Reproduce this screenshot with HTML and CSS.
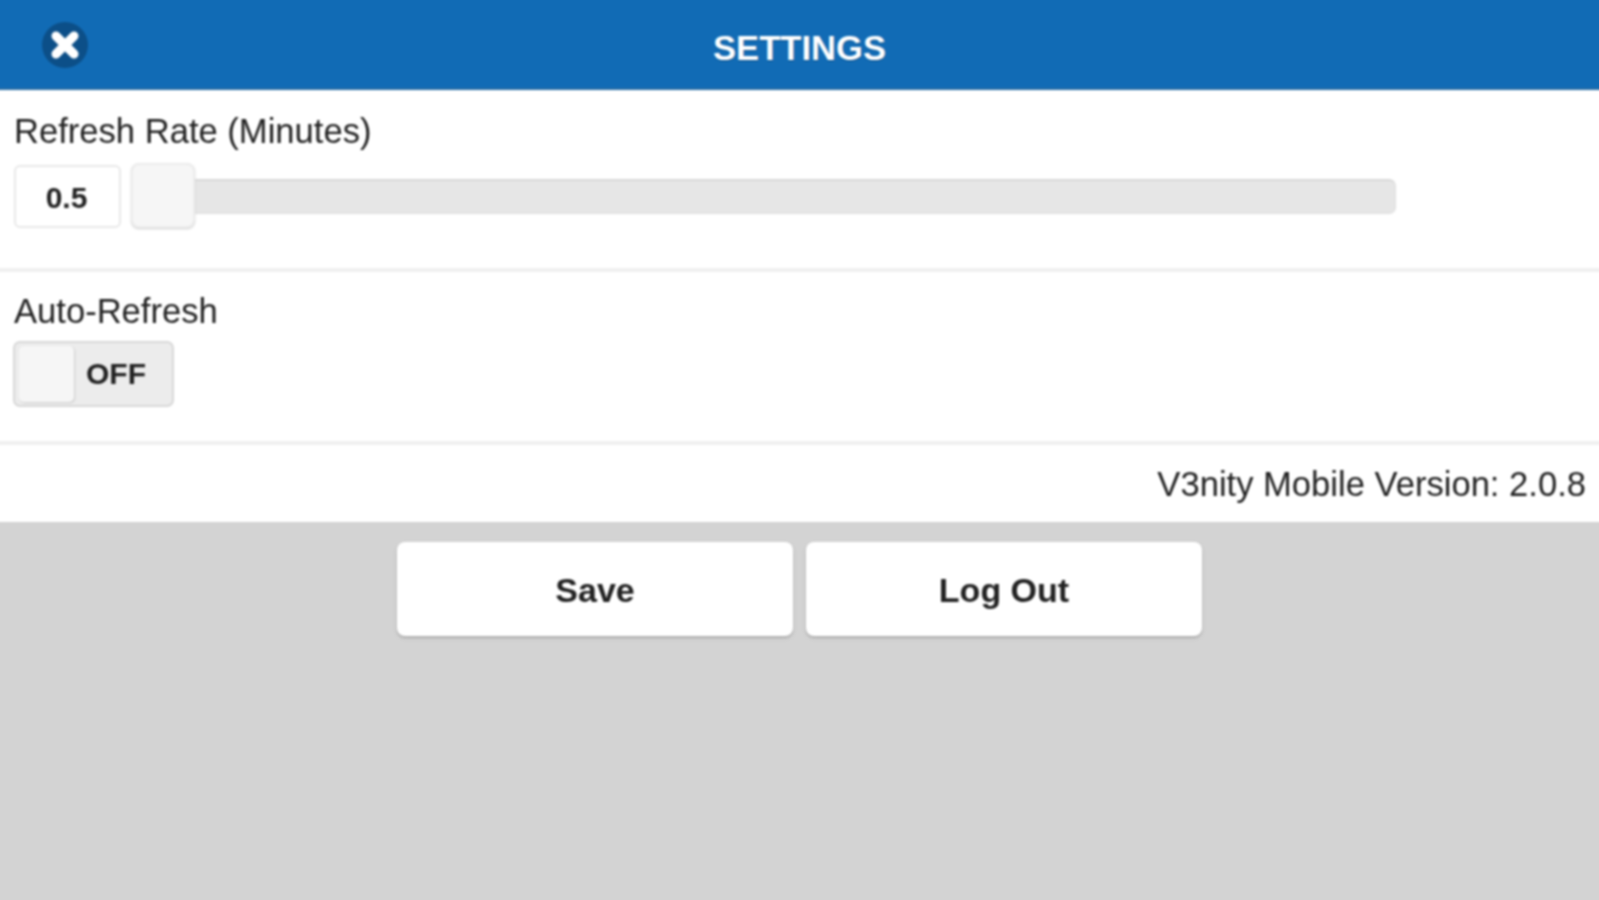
FILE: index.html
```html
<!doctype html>
<html lang="en-us">
  <head>
    <meta charset="utf-8">
    <title>Settings</title>
    <link rel="stylesheet" href="styles.css">
  </head>
  <body>
	<div class="page">
		<header class="header">
			<a class="close">
				<svg viewBox="0 0 46 46" width="46" height="46">
					<circle cx="23" cy="23" r="23" fill="#0c4f88"/>
					<path d="M14 14 L32 32 M32 14 L14 32" stroke="#fff" stroke-width="9" stroke-linecap="round"/>
				</svg>
			</a>
			<h1 class="title">SETTINGS</h1>
		</header>
		<div class="panel">
			<section class="field field-refresh">
				<label class="label">Refresh Rate (Minutes)</label>
				<div class="slider-row">
					<div class="value">0.5</div>
					<div class="slider">
						<div class="track"></div>
						<div class="thumb"></div>
					</div>
				</div>
			</section>
			<section class="field field-auto">
				<label class="label">Auto-Refresh</label>
				<div class="toggle">
					<div class="knob"></div>
					<span class="toggle-text">OFF</span>
				</div>
			</section>
			<div class="version">V3nity Mobile Version: 2.0.8</div>
		</div>
		<div class="actions">
			<button class="btn">Save</button>
			<button class="btn">Log Out</button>
		</div>
	</div>
  </body>
</html>
```

FILE: styles.css
```css
html, body
{
	margin: 0;
	padding: 0;
	height: 100%;
	overflow: hidden;
}

body
{
	background-color: #d3d3d3;
	font-family: "Liberation Sans", Arial, sans-serif;
	color: #222;
}

/* runs 4px past the window so the blur does not fade at the edges */
.page
{
	width: 1607px;
	height: 908px;
	margin: -4px -4px 0;
	filter: blur(1px);
}

.header
{
	height: 92px;
	background-color: #116bb5;
	border-bottom: 2px solid #2a6ea6;
	display: flex;
	align-items: center;
	justify-content: center;
	position: relative;
}

.close
{
	position: absolute;
	left: 46px;
	top: 26px;
	width: 46px;
	height: 46px;
}

.title
{
	margin: 0;
	padding-top: 12px;
	font-size: 34.6px;
	font-weight: bold;
	color: #fff;
	text-shadow: 0 1px 1px #0c4f88;
}

.panel
{
	background-color: #fff;
	height: 432px;
	display: flex;
	flex-direction: column;
}

.field
{
	padding-left: 18px;
	border-bottom: 4px solid #f0f0f0;
	box-sizing: border-box;
}

.field-refresh
{
	height: 182px;
	padding-top: 21px;
}

.field-auto
{
	height: 173px;
	padding-top: 19px;
}

.label
{
	display: block;
	font-size: 34.6px;
	line-height: 40px;
}

.slider-row
{
	display: flex;
	align-items: center;
	gap: 10px;
	margin-top: 12px;
}

.value
{
	width: 107px;
	height: 63px;
	box-sizing: border-box;
	padding-right: 2px;
	border: 2px solid #e8e8e8;
	border-radius: 6px;
	text-align: center;
	font-size: 30px;
	line-height: 62px;
	font-weight: bold;
}

.slider
{
	position: relative;
	width: 1265px;
	height: 66px;
	display: flex;
	align-items: center;
}

.track
{
	width: 100%;
	height: 35px;
	background-color: #e6e6e6;
	border-top: 2px solid #d8d8d8;
	border-bottom: 1px solid #dedede;
	border-right: 1px solid #dedede;
	box-sizing: border-box;
	border-radius: 7px;
}

.thumb
{
	position: absolute;
	left: 0;
	top: 0;
	width: 64px;
	height: 65px;
	box-sizing: border-box;
	background-color: #f6f6f6;
	border: 2px solid #ececec;
	border-radius: 8px;
	box-shadow: 0 1px 2px #ccc;
}

.toggle
{
	display: flex;
	align-items: center;
	width: 161px;
	height: 66px;
	box-sizing: border-box;
	margin-top: 10px;
	margin-left: -1px;
	padding: 4px;
	background-color: #ececec;
	border: 2px solid #d8d8d8;
	border-radius: 7px;
}

.knob
{
	width: 55px;
	height: 56px;
	background-color: #f6f6f6;
	border-radius: 5px;
	box-shadow: 1px 1px 2px #ccc;
}

.toggle-text
{
	margin-left: 12px;
	font-size: 30px;
	font-weight: bold;
}

.version
{
	flex: 1;
	display: flex;
	align-items: center;
	justify-content: flex-end;
	padding-top: 2px;
	padding-right: 17px;
	font-size: 34.6px;
}

.actions
{
	display: flex;
	justify-content: center;
	gap: 13px;
	padding-top: 20px;
}

.btn
{
	width: 396px;
	height: 94px;
	padding-top: 3px;
	background-color: #fff;
	border: 0;
	border-radius: 8px;
	box-shadow: 0 2px 3px #aaa;
	font-family: inherit;
	font-size: 34px;
	font-weight: bold;
	color: #222;
}
```
